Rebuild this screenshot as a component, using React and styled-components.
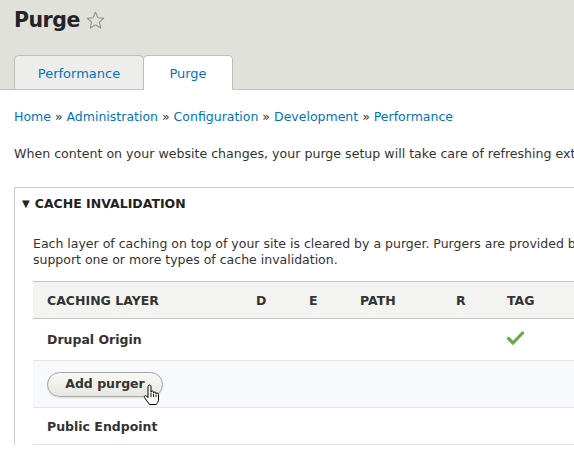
import React from "react";
import styled, { createGlobalStyle } from "styled-components";

const Global = createGlobalStyle`
  html, body { margin: 0; padding: 0; background: #fff; overflow: hidden; }
  body {
    font-family: "DejaVu Sans", "Liberation Sans", sans-serif;
    font-size: 12px;
    color: #333;
  }
`;

const Page = styled.div`
  width: 574px;
  height: 457px;
  overflow: hidden;
`;

const Header = styled.header`
  background: #e1e1db;
  padding: 5px 14px 0;
  border-bottom: 1px solid #c4c4be;
`;

const TitleRow = styled.div`
  display: flex;
  align-items: center;
  gap: 6px;
  height: 30px;
`;

const Title = styled.h1`
  margin: 0;
  font-size: 20.5px;
  letter-spacing: -0.5px;
  line-height: 30px;
  font-weight: bold;
  color: #232429;
`;

const Tabs = styled.nav`
  display: flex;
  margin-top: 20px;
  margin-bottom: -1px;
`;

const Tab = styled.a`
  display: flex;
  align-items: center;
  justify-content: center;
  box-sizing: border-box;
  width: ${(p) => p.$w}px;
  height: 35px;
  padding-top: 1px;
  font-size: 13px;
  color: #0074bd;
  text-decoration: none;
  background: ${(p) => (p.$active ? "#fff" : "#ededeb")};
  border: 1px solid #bfbfba;
  border-bottom-color: ${(p) => (p.$active ? "#fff" : "#c4c4be")};
  border-radius: 5px 5px 0 0;
  margin-left: ${(p) => (p.$active ? "-1px" : "0")};
`;

const Content = styled.main`
  padding: 0 14px;
`;

const Breadcrumb = styled.nav`
  margin-top: 18px;
  line-height: 18px;
  font-size: 12.5px;
  white-space: nowrap;
  color: #333;
  a { color: #0074bd; text-decoration: none; }
`;

const Intro = styled.p`
  margin: 19px 0 0;
  line-height: 18px;
  white-space: nowrap;
  font-size: 12.6px;
`;

const Details = styled.section`
  margin-top: 24px;
  width: 700px;
  border: 1px solid #ccc;
  border-bottom: none;
`;

const Summary = styled.div`
  display: flex;
  align-items: center;
  height: 30px;
  padding-left: 7px;
  gap: 5px;
  font-weight: bold;
  font-size: 12.5px;
  text-transform: uppercase;
  color: #222;
`;

const Arrow = styled.span`
  font-size: 10px;
`;

const Body = styled.div`
  padding: 18px 0 0 18px;
`;

const Para = styled.p`
  margin: 0;
  line-height: 16px;
  font-size: 12.5px;
  white-space: nowrap;
`;

const Table = styled.table`
  margin-top: 13px;
  width: 640px;
  border-collapse: collapse;
  table-layout: fixed;
`;

const Th = styled.th`
  text-align: left;
  padding: 0 14px;
  height: 36px;
  font-size: 12.5px;
  font-weight: bold;
  color: #333;
  text-transform: uppercase;
`;

const HeadRow = styled.tr`
  background: #f3f3f1;
  border-top: 1px solid #c4c4c0;
  border-bottom: 1px solid #c4c4c0;
`;

const Row = styled.tr`
  background: ${(p) => (p.$tint ? "#f7f9fc" : "#fff")};
  border-bottom: 1px solid #e4e4e0;
`;

const Td = styled.td`
  padding: 0 14px;
  height: ${(p) => p.$h}px;
  font-weight: ${(p) => (p.$bold ? "bold" : "normal")};
  font-size: 12.5px;
  color: #333;
  vertical-align: middle;
`;

const ButtonWrap = styled.span`
  position: relative;
  display: inline-block;
`;

const Button = styled.button`
  box-sizing: border-box;
  width: 116px;
  height: 25px;
  border: 1px solid #a6a6a2;
  border-radius: 13px;
  background: linear-gradient(#f8f8f5, #e7e7e2);
  font-family: "DejaVu Sans", sans-serif;
  font-weight: bold;
  font-size: 12.5px;
  color: #333;
  padding: 0 0 1px;
  box-shadow: 0 1px 2px rgba(0,0,0,0.12);
`;

const Cursor = styled.svg`
  position: absolute;
  left: 96px;
  top: 12px;
`;

const Star = () => (
  <svg width="19" height="19" viewBox="0 0 20 20">
    <path
      d="M10 1.3 L12.6 7.1 L18.8 7.6 L14.1 11.7 L15.5 17.9 L10 14.6 L4.5 17.9 L5.9 11.7 L1.2 7.6 L7.4 7.1 Z"
      fill="none"
      stroke="#8d8d84"
      strokeWidth="1.1"
      strokeLinejoin="round"
    />
  </svg>
);

const Check = () => (
  <svg width="17" height="14" viewBox="0 0 17 14">
    <path d="M1.5 7.5 L6 12 L15.5 2" fill="none" stroke="#6aaa4a" strokeWidth="3.2" strokeLinecap="round" strokeLinejoin="round" />
  </svg>
);

const Hand = () => (
  <Cursor width="17" height="22" viewBox="0 0 17 22">
    <path
      d="M6.5 1 C7.3 1 8 1.6 8 2.5 V8 C8.2 7.4 8.7 7 9.3 7 C10 7 10.5 7.5 10.5 8.3 V9 C10.7 8.4 11.2 8 11.8 8 C12.5 8 13 8.5 13 9.3 V10 C13.2 9.4 13.7 9 14.3 9 C15 9 15.5 9.6 15.5 10.3 V15 C15.5 17.5 14.5 19.5 13 20.5 H6.5 C5.5 19 4 17 2.5 15 C1.8 14 1.2 13 1.5 12.2 C1.9 11.5 2.9 11.5 3.6 12.2 L5 13.6 V2.5 C5 1.6 5.7 1 6.5 1 Z"
      fill="#fff"
      stroke="#000"
      strokeWidth="1"
    />
    <path d="M8 8.5 V13 M10.5 9.5 V13 M13 10.5 V13" stroke="#000" strokeWidth="0.9" fill="none" />
  </Cursor>
);

export default function App() {
  return (
    <Page>
      <Global />
      <Header>
        <TitleRow>
          <Title>Purge</Title>
          <Star />
        </TitleRow>
        <Tabs>
          <Tab href="#" $w={130}>Performance</Tab>
          <Tab href="#" $w={90} $active>Purge</Tab>
        </Tabs>
      </Header>
      <Content>
        <Breadcrumb>
          <a href="#">Home</a> » <a href="#">Administration</a> » <a href="#">Configuration</a> »{" "}
          <a href="#">Development</a> » <a href="#">Performance</a>
        </Breadcrumb>
        <Intro>
          When content on your website changes, your purge setup will take care of refreshing external caching systems and CDNs.
        </Intro>
        <Details>
          <Summary>
            <Arrow>▼</Arrow>
            Cache invalidation
          </Summary>
          <Body>
            <Para>
              Each layer of caching on top of your site is cleared by a purger. Purgers are provided by modules and
            </Para>
            <Para>support one or more types of cache invalidation.</Para>
            <Table>
              <colgroup>
                <col style={{ width: 209 }} />
                <col style={{ width: 53 }} />
                <col style={{ width: 51 }} />
                <col style={{ width: 96 }} />
                <col style={{ width: 51 }} />
                <col />
              </colgroup>
              <thead>
                <HeadRow>
                  <Th>Caching layer</Th>
                  <Th>D</Th>
                  <Th>E</Th>
                  <Th>Path</Th>
                  <Th>R</Th>
                  <Th>Tag</Th>
                </HeadRow>
              </thead>
              <tbody>
                <Row>
                  <Td $h={41} $bold>Drupal Origin</Td>
                  <Td />
                  <Td />
                  <Td />
                  <Td />
                  <Td><Check /></Td>
                </Row>
                <Row $tint>
                  <Td $h={46} colSpan={6}>
                    <ButtonWrap>
                      <Button>Add purger</Button>
                      <Hand />
                    </ButtonWrap>
                  </Td>
                </Row>
                <Row>
                  <Td $h={36} $bold>Public Endpoint</Td>
                  <Td />
                  <Td />
                  <Td />
                  <Td />
                  <Td />
                </Row>
              </tbody>
            </Table>
          </Body>
        </Details>
      </Content>
    </Page>
  );
}
